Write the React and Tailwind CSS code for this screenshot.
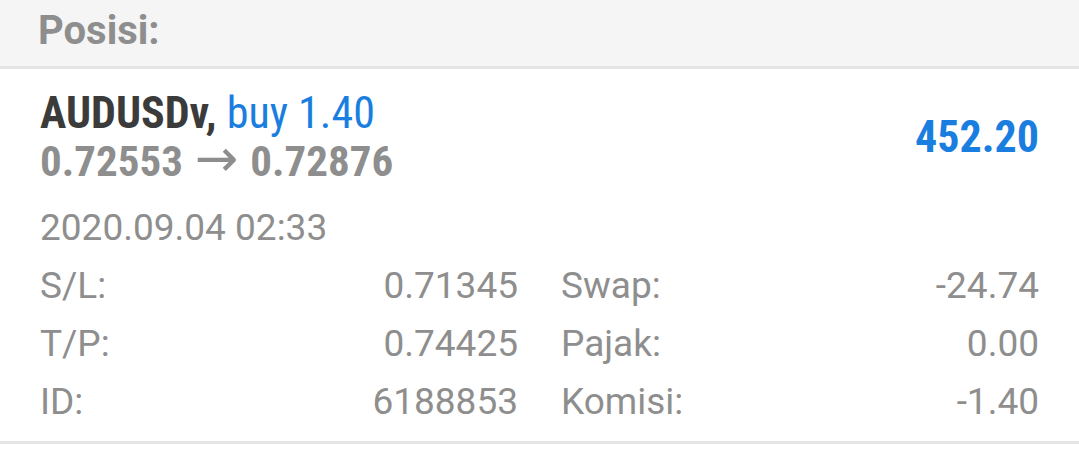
import React from "react";

const cond = "font-['Roboto_Condensed','Roboto',sans-serif] [font-stretch:75%] font-bold";

const rows = [
  ["S/L:", "0.71345", "Swap:", "-24.74"],
  ["T/P:", "0.74425", "Pajak:", "0.00"],
  ["ID:", "6188853", "Komisi:", "-1.40"],
];

const App = () => {
  return (
    <div className="w-[1079px] h-[472px] bg-white font-['Roboto',sans-serif] overflow-hidden">
      {/* section header */}
      <div className="h-[69px] bg-[#f5f5f5] border-b-[3px] border-[#e5e5e5] px-[38px] flex items-center pb-[4px]">
        <span className="text-[40px] font-bold text-[#8e8e8e] leading-none">Posisi:</span>
      </div>

      {/* position card */}
      <div className="px-[40px] pt-[20px] pb-[10px] border-b-[3px] border-[#e5e5e5]">
        <div className="flex justify-between items-center">
          <div>
            <div className={`${cond} text-[44px] leading-[48px]`}>
              <span className="text-[#3b3b3b]">AUDUSDv, </span>
              <span className="text-[#1a7ee0] font-normal">buy 1.40</span>
            </div>
            <div className={`${cond} text-[43px] leading-[48px] text-[#8e8e8e]`}>
              0.72553{" "}
              <span className="font-['DejaVu_Sans',sans-serif] [font-stretch:100%] font-normal text-[52px] leading-[30px] mx-[2px]">→</span>
              {" "}0.72876
            </div>
          </div>
          <div className={`${cond} text-[44px] leading-[48px] text-[#1a7ee0]`}>452.20</div>
        </div>

        <div className="mt-[14px] text-[37px] leading-[58px] text-[#8e8e8e]">2020.09.04 02:33</div>

        <div className="grid grid-cols-2 gap-x-[43px] text-[37px] leading-[58px] text-[#8e8e8e]">
          {rows.map(([l1, v1, l2, v2]) => (
            <React.Fragment key={l1}>
              <div className="flex justify-between">
                <span>{l1}</span>
                <span>{v1}</span>
              </div>
              <div className="flex justify-between">
                <span>{l2}</span>
                <span>{v2}</span>
              </div>
            </React.Fragment>
          ))}
        </div>
      </div>
    </div>
  );
};

export default App;
